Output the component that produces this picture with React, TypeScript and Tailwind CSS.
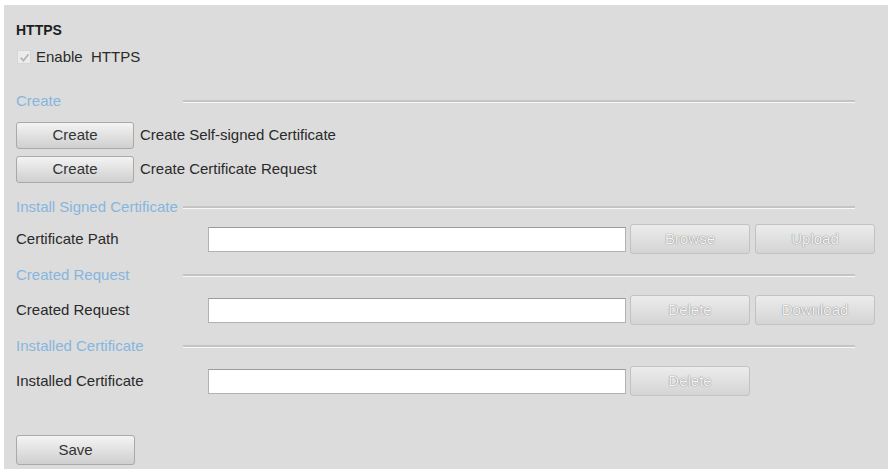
import React from "react"

const font = { fontFamily: '"Liberation Sans", Arial, sans-serif' }

function SectionHeader({ title, className = "" }: { title: string; className?: string }) {
  return (
    <div className={`flex items-center h-[20px] ${className}`}>
      <div className="w-[167px] shrink-0 text-[15px] text-[#86b6de] whitespace-nowrap">{title}</div>
      <div className="w-[672px] h-[3px] border-t-2 border-[#c4c4c4] border-b border-b-[#f7f7f7]" />
    </div>
  )
}

function Btn({ label, disabled = false, className = "" }: { label: string; disabled?: boolean; className?: string }) {
  return (
    <button
      className={`rounded-[3px] border text-[15px] ${
        disabled
          ? "border-[#c2c2c2] bg-gradient-to-b from-[#ececec] to-[#d4d4d4] text-[#f4f4f4] [text-shadow:0_0_1px_#8a8a8a,0_0_1px_#8a8a8a]"
          : "border-[#a9a9a9] bg-gradient-to-b from-[#f4f4f4] to-[#cfcfcf] text-[#333]"
      } ${className}`}
    >
      {label}
    </button>
  )
}

function FieldRow({ label, buttons, className = "" }: { label: string; buttons: string[]; className?: string }) {
  return (
    <div className={`flex items-center h-[30px] ${className}`}>
      <div className="w-[192px] shrink-0 text-[15px] text-[#2a2a2a]">{label}</div>
      <div className="w-[418px] h-[25px] bg-white border border-[#b2b2b2] border-t-[#9c9c9c]" />
      <div className="flex gap-[5px] ml-[4px]">
        {buttons.map((b) => (
          <Btn key={b} label={b} disabled className="w-[120px] h-[30px]" />
        ))}
      </div>
    </div>
  )
}

export default function App() {
  return (
    <div className="w-[895px] h-[474px] bg-white pt-[5px] pl-[4px]" style={font}>
      <div className="w-[884px] h-[464px] bg-[#dcdcdc] pt-[15px] px-[12px]">
        <div className="h-[20px] flex items-center text-[14px] font-bold text-[#1e1e1e]">HTTPS</div>

        <div className="h-[20px] flex items-center mt-[7px]">
          <div className="w-[14px] h-[14px] ml-[1px] bg-[#ececec] border border-[#d6d6d6] flex items-center justify-center">
            <svg width="11" height="11" viewBox="0 0 10 10">
              <path d="M1.5 5.2 L4 7.8 L8.6 2" fill="none" stroke="#b4b4b4" strokeWidth="1.6" />
            </svg>
          </div>
          <span className="ml-[5px] text-[15px] text-[#2a2a2a] whitespace-pre">Enable  HTTPS</span>
        </div>

        <SectionHeader title="Create" className="mt-[24px]" />

        <div className="flex items-center mt-[11px]">
          <Btn label="Create" className="w-[118px] h-[27px]" />
          <span className="ml-[6px] text-[15px] text-[#2a2a2a]">Create Self-signed Certificate</span>
        </div>
        <div className="flex items-center mt-[7px]">
          <Btn label="Create" className="w-[118px] h-[27px]" />
          <span className="ml-[6px] text-[15px] text-[#2a2a2a]">Create Certificate Request</span>
        </div>

        <SectionHeader title="Install Signed Certificate" className="mt-[14px]" />
        <FieldRow label="Certificate Path" buttons={["Browse", "Upload"]} className="mt-[7px]" />

        <SectionHeader title="Created Request" className="mt-[11px]" />
        <FieldRow label="Created Request" buttons={["Delete", "Download"]} className="mt-[10px]" />

        <SectionHeader title="Installed Certificate" className="mt-[11px]" />
        <FieldRow label="Installed Certificate" buttons={["Delete"]} className="mt-[10px]" />

        <Btn label="Save" className="w-[119px] h-[30px] mt-[39px]" />
      </div>
    </div>
  )
}
